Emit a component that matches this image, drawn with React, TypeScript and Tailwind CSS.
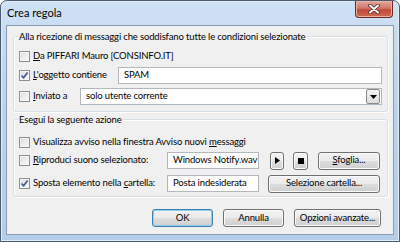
import type { ReactNode } from 'react'

const font = "font-['Lato','Liberation_Sans',sans-serif]"

function Check({ checked }: { checked?: boolean }) {
  return (
    <span className="flex h-[11px] w-[11px] shrink-0 items-center justify-center border border-[#8f8f8f] bg-gradient-to-br from-[#dcdcdc] to-[#fbfbfb] shadow-[inset_0_0_0_1px_#f4f4f4]">
      {checked && (
        <svg width="9" height="9" viewBox="0 0 9 9">
          <path d="M1.5 4.5 L3.6 6.8 L7.6 1.5" fill="none" stroke="#3d5590" strokeWidth="1.6" />
        </svg>
      )}
    </span>
  )
}

function Label({ children, checked, w }: { children: ReactNode, checked?: boolean, w?: string }) {
  return (
    <span className={`flex shrink-0 items-center gap-[3px] ${w ?? ''}`}>
      <Check checked={checked} />
      <span className="whitespace-nowrap">{children}</span>
    </span>
  )
}

function Field({ children, className }: { children?: ReactNode, className?: string }) {
  return (
    <div className={`flex h-[17px] shrink-0 items-center overflow-hidden whitespace-nowrap border border-[#b4b8bd] bg-white px-[5px] ${className ?? ''}`}>
      {children}
    </div>
  )
}

function Btn({ children, className, focus }: { children: ReactNode, className?: string, focus?: boolean }) {
  return (
    <div
      className={`flex h-[18px] shrink-0 items-center justify-center whitespace-nowrap rounded-[3px] border bg-[linear-gradient(#f2f2f2_0%,#ebebeb_50%,#dddddd_51%,#cfcfcf_100%)] ${focus ? 'border-[#3c7fb1] shadow-[inset_0_0_0_1px_#8fd0f2]' : 'border-[#707070] shadow-[inset_0_0_0_1px_#fcfcfc]'} ${className ?? ''}`}
    >
      {children}
    </div>
  )
}

function Group({ title, children, className }: { title: string, children: ReactNode, className?: string }) {
  return (
    <div className={`ml-[6px] mr-[5px] flex flex-col rounded-[3px] border border-[#d5dfe5] shadow-[inset_1px_1px_0_#fff,1px_1px_0_#fff] ${className ?? ''}`}>
      <span className="-mt-[7px] ml-[4px] h-[13px] w-fit whitespace-nowrap bg-[#f0f0f0] px-[1px] leading-[13px]">{title}</span>
      {children}
    </div>
  )
}

export default function App() {
  return (
    <div className={`h-[242px] w-[400px] text-[9.5px] tracking-[-0.15px] text-black ${font}`}>
      <div className="flex h-full flex-col rounded-t-[7px] border border-[#4b5a6b] bg-[linear-gradient(#cfe1f4,#bcd4ee_40%,#b4cde8)] shadow-[inset_0_0_0_1px_#e2edf8]">
        <div className="flex h-[24px] shrink-0 justify-between">
          <span className="pl-[6px] pt-[5px] text-[11px] leading-[14px] tracking-normal">Crea regola</span>
          <div className="mr-[6px] flex h-[17px] w-[38px] items-center justify-center rounded-b-[4px] border border-t-0 border-[#6e2a22] bg-[linear-gradient(#e3a89c,#d0776a_45%,#c2493a_55%,#cf6b4f)] shadow-[inset_0_0_0_1px_#eab1a4]">
            <svg width="12" height="10" viewBox="0 0 12 10">
              <path d="M2 1.5 L10 8.5 M10 1.5 L2 8.5" stroke="#4a2a25" strokeWidth="3.6" strokeLinecap="round" />
              <path d="M2 1.5 L10 8.5 M10 1.5 L2 8.5" stroke="#fff" strokeWidth="2" strokeLinecap="round" />
            </svg>
          </div>
        </div>
        <div className="mx-[5px] mb-[6px] flex flex-1 flex-col border border-[#8a9cb2] bg-[#f0f0f0]">
          <Group title="Alla ricezione di messaggi che soddisfano tutte le condizioni selezionate" className="mt-[10px] pb-[6px]">
            <div className="ml-[5px] mt-[4px] flex h-[18px] items-center">
              <Label><u>D</u>a PIFFARI Mauro [CONSINFO.IT]</Label>
            </div>
            <div className="ml-[5px] mr-[5px] mt-[2px] flex h-[17px] items-center justify-between">
              <Label checked><u>L</u>'oggetto contiene</Label>
              <Field className="w-[264px]">SPAM</Field>
            </div>
            <div className="ml-[5px] mr-[5px] mt-[4px] flex h-[17px] items-center justify-between">
              <Label><u>I</u>nviato a</Label>
              <Field className="w-[302px] justify-between pr-[1px]">
                <span>solo utente corrente</span>
                <span className="flex h-[15px] w-[14px] items-center justify-center rounded-[2px] border border-[#8a8a8a] bg-[linear-gradient(#f4f4f4,#dcdcdc)]">
                  <svg width="7" height="4" viewBox="0 0 7 4"><path d="M0 0 H7 L3.5 4 Z" fill="#000" /></svg>
                </span>
              </Field>
            </div>
          </Group>
          <Group title="Esegui la seguente azione" className="mt-[7px] pb-[4px]">
            <div className="ml-[5px] mt-[7px] flex h-[18px] items-center">
              <Label>Visualizza avviso nella finestra Avviso nuovi <u>m</u>essaggi</Label>
            </div>
            <div className="ml-[5px] mt-[1px] flex h-[17px] items-center">
              <Label w="w-[148px]"><u>R</u>iproduci suono selezionato:</Label>
              <Field className="w-[92px] px-[4px]">Windows Notify.wav</Field>
              <Btn className="ml-[11px] w-[14px]">
                <svg width="5" height="7" viewBox="0 0 5 7"><path d="M0 0 L5 3.5 L0 7 Z" fill="#000" /></svg>
              </Btn>
              <Btn className="ml-[9px] w-[15px]">
                <span className="h-[6px] w-[6px] bg-black" />
              </Btn>
              <Btn className="ml-[10px] w-[62px]"><span><u>S</u>foglia...</span></Btn>
            </div>
            <div className="ml-[5px] mt-[6px] flex h-[17px] items-center">
              <Label checked w="w-[148px]">Sposta elemento nella <u>c</u>artella:</Label>
              <Field className="w-[92px] px-[4px]">Posta indesiderata</Field>
              <Btn className="ml-[9px] h-[17px] w-[112px]">Selezione cartella...</Btn>
            </div>
          </Group>
          <div className="mr-[12px] mt-[12px] flex justify-end gap-[10px]">
            <Btn focus className="w-[61px]">OK</Btn>
            <Btn className="w-[61px]">Annulla</Btn>
            <Btn className="w-[87px]">Opzioni avanzate...</Btn>
          </div>
        </div>
      </div>
    </div>
  )
}
